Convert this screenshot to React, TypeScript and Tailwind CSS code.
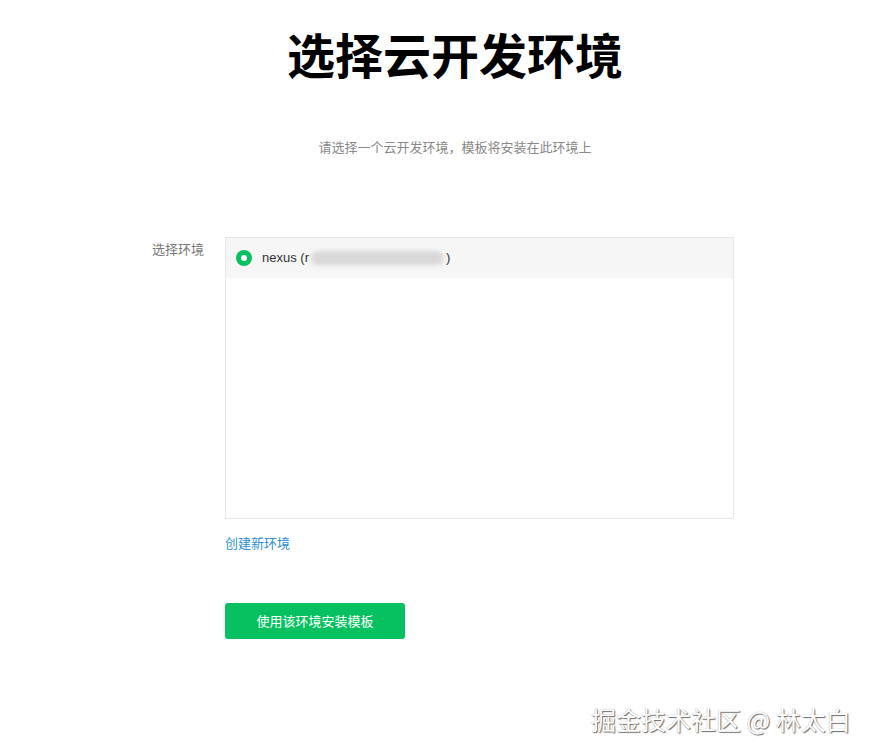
import React from "react";

export default function App() {
  const font = { fontFamily: '"Noto Sans CJK SC", "Noto Sans", "Liberation Sans", sans-serif' };
  return (
    <div className="relative w-full min-h-[754px] bg-white" style={font}>
      <div className="flex flex-col items-center pl-[36px]">
        <h1 className="mt-[25px] text-[48px] leading-[56px] font-bold text-black">选择云开发环境</h1>
        <p className="mt-[56px] text-[13px] leading-[20px] text-[#888888]">请选择一个云开发环境，模板将安装在此环境上</p>
      </div>
      <div className="mt-[80px] flex pl-[152px]">
        <div className="w-[73px] pt-[2px] text-[13px] leading-[20px] text-[#777777]">选择环境</div>
        <div className="flex flex-col">
          <div className="w-[509px] h-[282px] border border-[#e6e6e6]">
            <div className="flex h-[40px] items-center bg-[#f6f6f6] pl-[10px]">
              <span className="flex h-[16px] w-[16px] items-center justify-center rounded-full bg-[#07c160]">
                <span className="h-[6px] w-[6px] rounded-full bg-white" />
              </span>
              <span className="ml-[10px] flex items-center text-[13px] text-[#333333]" style={{ fontFamily: '"Liberation Sans", "Noto Sans CJK SC", sans-serif' }}>
                nexus (r
                <span className="mx-[2px] inline-block h-[14px] w-[133px] rounded-full bg-[#d8d8d8] blur-[2px]" />
                )
              </span>
            </div>
          </div>
          <a className="mt-[14px] text-[13px] leading-[20px] text-[#2a8fd8]">创建新环境</a>
          <button className="mt-[50px] h-[36px] w-[180px] rounded-[3px] bg-[#07c160] text-[13px] font-normal text-white">使用该环境安装模板</button>
        </div>
      </div>
      <div
        className="absolute left-[591px] top-[702px] text-[25px] leading-[34px] text-white"
        style={{ textShadow: "1px 1px 1px #6b6b6b, 0 0 1px #9a9a9a" }}
      >
        掘金技术社区 @ 林太白
      </div>
    </div>
  );
}
